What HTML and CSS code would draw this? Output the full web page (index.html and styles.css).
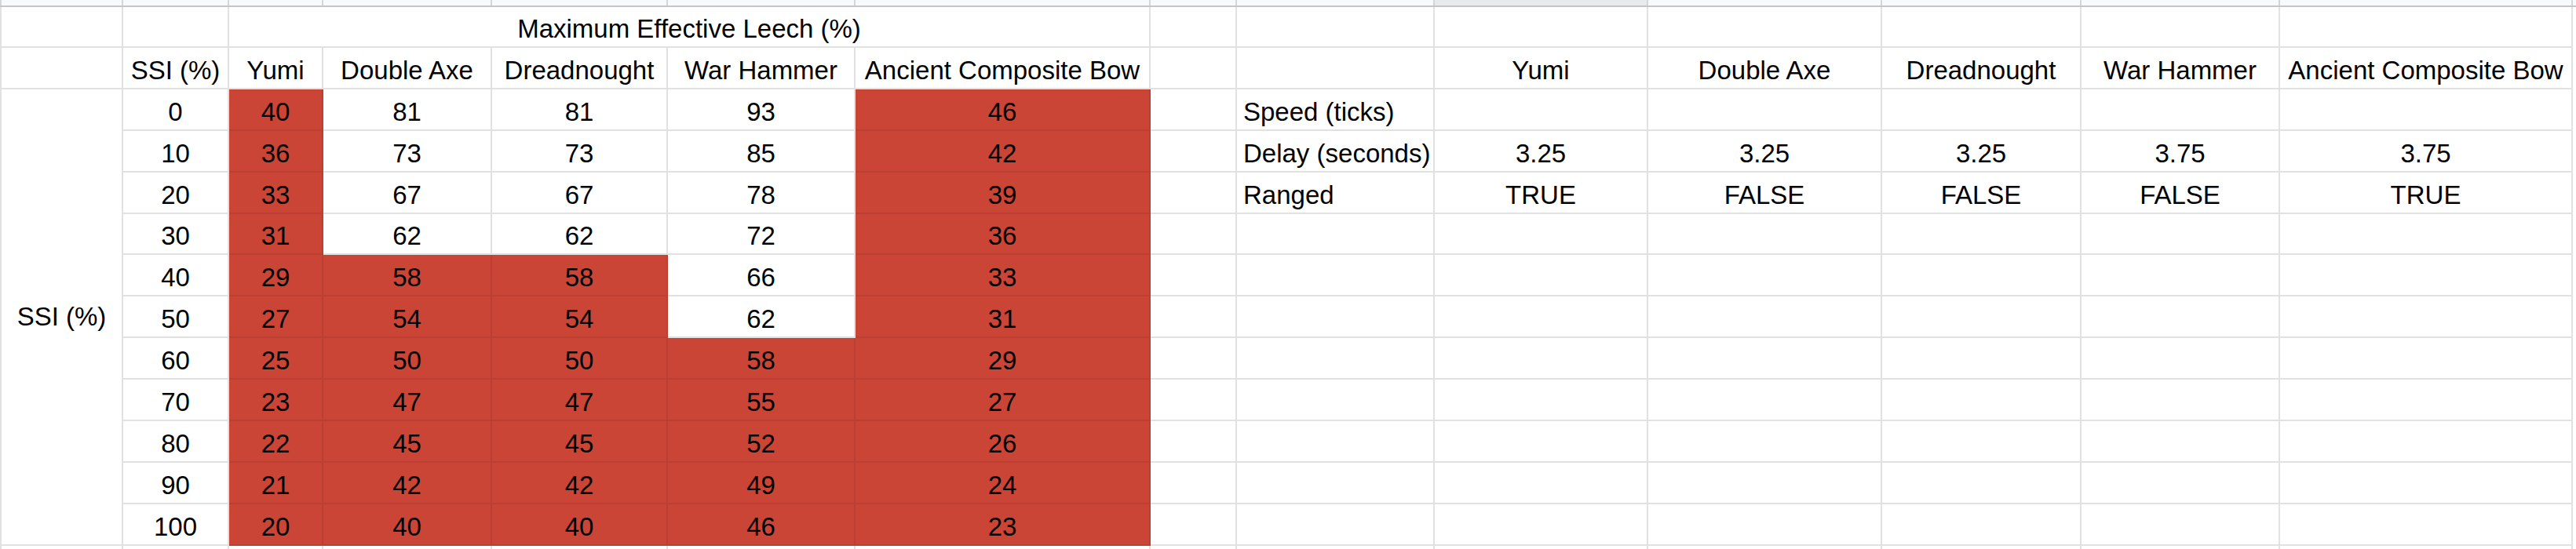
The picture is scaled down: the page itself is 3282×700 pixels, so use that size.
FILE: index.html
```html
<!DOCTYPE html>
<html>
<head>
<meta charset="utf-8">
<link rel="stylesheet" href="styles.css">
</head>
<body>
<div class="sheet">
  <div class="colheads">
    <div class="h"></div><div class="h"></div><div class="h"></div><div class="h"></div><div class="h"></div><div class="h"></div><div class="h"></div><div class="h"></div><div class="h"></div><div class="h sel"></div><div class="h"></div><div class="h"></div><div class="h"></div><div class="h"></div>
  </div>
  <div class="grid">
    <!-- row 1 -->
    <div class="c first"></div><div class="c"></div>
    <div class="c n span5">Maximum Effective Leech (%)</div>
    <div class="c"></div><div class="c"></div><div class="c"></div><div class="c"></div><div class="c"></div><div class="c"></div><div class="c"></div>
    <!-- row 2 -->
    <div class="c first"></div>
    <div class="c n">SSI (%)</div>
    <div class="c n">Yumi</div>
    <div class="c n">Double Axe</div>
    <div class="c n">Dreadnought</div>
    <div class="c n">War Hammer</div>
    <div class="c n">Ancient Composite Bow</div>
    <div class="c"></div>
    <div class="c"></div>
    <div class="c n">Yumi</div>
    <div class="c n">Double Axe</div>
    <div class="c n">Dreadnought</div>
    <div class="c n">War Hammer</div>
    <div class="c n">Ancient Composite Bow</div>
    <!-- row 3 -->
    <div class="c first n mid tall">SSI (%)</div>
    <div class="c n">0</div><div class="c n r">40</div><div class="c n">81</div><div class="c n">81</div><div class="c n">93</div><div class="c n r">46</div>
    <div class="c"></div><div class="c l">Speed (ticks)</div><div class="c"></div><div class="c"></div><div class="c"></div><div class="c"></div><div class="c"></div>
    <!-- row 4 -->
    <div class="c n">10</div><div class="c n r">36</div><div class="c n">73</div><div class="c n">73</div><div class="c n">85</div><div class="c n r">42</div>
    <div class="c"></div><div class="c l">Delay (seconds)</div><div class="c n">3.25</div><div class="c n">3.25</div><div class="c n">3.25</div><div class="c n">3.75</div><div class="c n">3.75</div>
    <!-- row 5 -->
    <div class="c n">20</div><div class="c n r">33</div><div class="c n">67</div><div class="c n">67</div><div class="c n">78</div><div class="c n r">39</div>
    <div class="c"></div><div class="c l">Ranged</div><div class="c n">TRUE</div><div class="c n">FALSE</div><div class="c n">FALSE</div><div class="c n">FALSE</div><div class="c n">TRUE</div>
    <!-- row 6 -->
    <div class="c n">30</div><div class="c n r">31</div><div class="c n">62</div><div class="c n">62</div><div class="c n">72</div><div class="c n r">36</div>
    <div class="c"></div><div class="c"></div><div class="c"></div><div class="c"></div><div class="c"></div><div class="c"></div><div class="c"></div>
    <!-- row 7 -->
    <div class="c n">40</div><div class="c n r">29</div><div class="c n r">58</div><div class="c n r">58</div><div class="c n">66</div><div class="c n r">33</div>
    <div class="c"></div><div class="c"></div><div class="c"></div><div class="c"></div><div class="c"></div><div class="c"></div><div class="c"></div>
    <!-- row 8 -->
    <div class="c n">50</div><div class="c n r">27</div><div class="c n r">54</div><div class="c n r">54</div><div class="c n">62</div><div class="c n r">31</div>
    <div class="c"></div><div class="c"></div><div class="c"></div><div class="c"></div><div class="c"></div><div class="c"></div><div class="c"></div>
    <!-- row 9 -->
    <div class="c n">60</div><div class="c n r">25</div><div class="c n r">50</div><div class="c n r">50</div><div class="c n r">58</div><div class="c n r">29</div>
    <div class="c"></div><div class="c"></div><div class="c"></div><div class="c"></div><div class="c"></div><div class="c"></div><div class="c"></div>
    <!-- row 10 -->
    <div class="c n">70</div><div class="c n r">23</div><div class="c n r">47</div><div class="c n r">47</div><div class="c n r">55</div><div class="c n r">27</div>
    <div class="c"></div><div class="c"></div><div class="c"></div><div class="c"></div><div class="c"></div><div class="c"></div><div class="c"></div>
    <!-- row 11 -->
    <div class="c n">80</div><div class="c n r">22</div><div class="c n r">45</div><div class="c n r">45</div><div class="c n r">52</div><div class="c n r">26</div>
    <div class="c"></div><div class="c"></div><div class="c"></div><div class="c"></div><div class="c"></div><div class="c"></div><div class="c"></div>
    <!-- row 12 -->
    <div class="c n">90</div><div class="c n r">21</div><div class="c n r">42</div><div class="c n r">42</div><div class="c n r">49</div><div class="c n r">24</div>
    <div class="c"></div><div class="c"></div><div class="c"></div><div class="c"></div><div class="c"></div><div class="c"></div><div class="c"></div>
    <!-- row 13 -->
    <div class="c n">100</div><div class="c n r">20</div><div class="c n r">40</div><div class="c n r">40</div><div class="c n r">46</div><div class="c n r">23</div>
    <div class="c"></div><div class="c"></div><div class="c"></div><div class="c"></div><div class="c"></div><div class="c"></div><div class="c"></div>
    <!-- row 14 (partially visible) -->
    <div class="c first"></div><div class="c"></div><div class="c"></div><div class="c"></div><div class="c"></div><div class="c"></div><div class="c"></div><div class="c"></div><div class="c"></div><div class="c"></div><div class="c"></div><div class="c"></div><div class="c"></div><div class="c"></div>
  </div>
</div>
</body>
</html>
```

FILE: styles.css
```css
html, body {
  margin: 0;
  padding: 0;
  background: #ffffff;
  overflow: hidden;
}

body {
  width: 3282px;
  height: 700px;
  font-family: "Liberation Sans", Arial, sans-serif;
  font-size: 33px;
  color: #000000;
}

.sheet {
  width: 3282px;
  height: 700px;
  overflow: hidden;
}

.colheads,
.grid {
  display: grid;
  grid-template-columns: 157px 135px 120px 215px 224px 239px 376px 110px 252px 272px 298px 254px 253px 373px;
}

.colheads {
  height: 9px;
  box-sizing: border-box;
  border-bottom: 2px solid #c4c7c5;
  background: #f8f9fa;
}

.h {
  box-sizing: border-box;
  border-right: 2px solid #d3d5d6;
}

.h:first-child {
  border-left: 2px solid #d3d5d6;
}

.h.sel {
  background: #e8eaed;
}

.grid {
  grid-template-rows: 52px repeat(12, 52.9px) 20px;
}

.c {
  box-sizing: border-box;
  border-right: 2px solid #e1e1e1;
  border-bottom: 2px solid #e1e1e1;
  display: flex;
  align-items: flex-end;
  line-height: 38px;
  padding: 0 8px 3px 8px;
  white-space: nowrap;
  overflow: visible;
}

.first {
  border-left: 2px solid #e1e1e1;
}

.n {
  justify-content: center;
}

.l {
  justify-content: flex-start;
}

.mid {
  align-items: center;
  padding-bottom: 0;
}

.tall {
  grid-row: span 11;
}

.span5 {
  grid-column: span 5;
}

.r {
  background: #cb4536;
  border-right-color: #bb3f32;
  border-bottom-color: #bb3f32;
}
```
